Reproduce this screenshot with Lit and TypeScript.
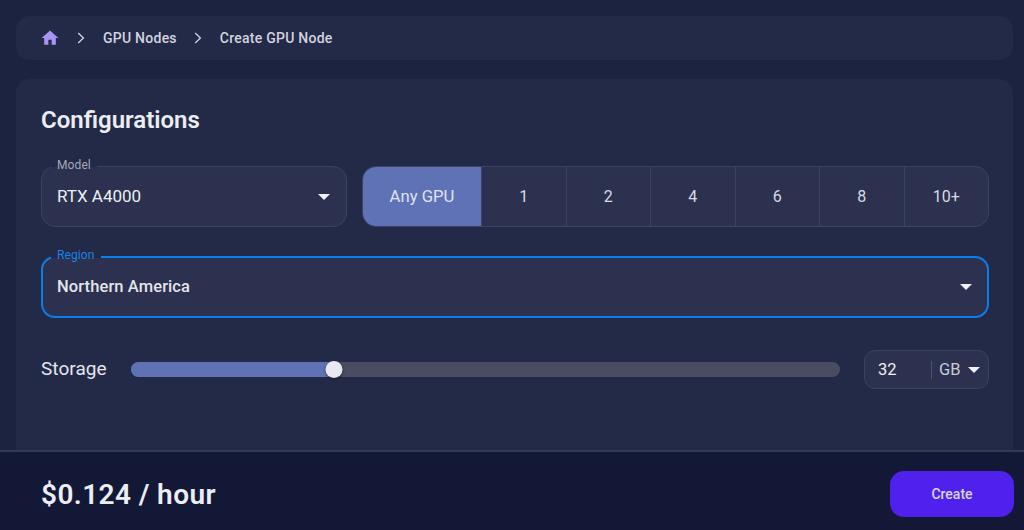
import { LitElement, html, css } from "lit";
import { customElement } from "lit/decorators.js";

const caret = html`<svg class="caret" width="12" height="6" viewBox="0 0 12 6"><path d="M0 0H12L6 6Z" fill="#f2f2f6"/></svg>`;

@customElement("app-root")
export class AppRoot extends LitElement {
  static styles = css`
    :host { display: block; width: 1024px; height: 530px; overflow: hidden; background: #1c2340; font-family: Roboto, "Liberation Sans", sans-serif; color: #e9e9f0; }
    * { box-sizing: border-box; }
    .page { height: 530px; display: flex; flex-direction: column; }
    .main { flex: 1; min-height: 0; padding: 16px 11px 0 16px; display: flex; flex-direction: column; gap: 19px; }
    .crumbs { height: 44px; border-radius: 14px; background: #232a48; display: flex; align-items: center; padding-left: 24px; font-size: 14px; font-weight: 500; color: #d2d3df; letter-spacing: 0.25px; }
    .crumbs .home { margin-right: 17px; }
    .crumbs .chev { margin-right: 18px; }
    .crumbs .lbl { margin-right: 17px; }
    .card { flex: 1; background: #232a48; border-radius: 14px 14px 0 0; padding: 25px 24px 0 25px; }
    h1 { margin: 0 0 30px; font-size: 24px; line-height: 32px; font-weight: 600; color: #ecedf3; }
    .row { display: flex; gap: 15px; margin-bottom: 30px; }
    .field { position: relative; height: 61px; border: 1px solid #3c4360; border-radius: 14px; background: #2b314e; display: flex; align-items: center; justify-content: space-between; padding: 0 16px 0 15px; font-size: 17px; color: #eeeef4; }
    .val { margin-top: -2px; }
    .model { width: 306px; flex: none; }
    .region { height: 62px; margin-top: -1px; border: 2px solid #0a7fec; padding: 0 15px 0 14px; margin-bottom: 32px; font-size: 16.5px; font-weight: 500; letter-spacing: 0.1px; color: #e4e5ec; }
    .legend { position: absolute; top: -12px; left: 9px; padding: 0 6px; font-size: 12px; font-weight: 400; line-height: 20px; letter-spacing: 0.1px; background: linear-gradient(#232a48 12px, #2b314e 12px); color: #a5a8b8; }
    .region .legend { left: 8px; top: -13px; color: #1b83e6; background: linear-gradient(#232a48 13px, #2b314e 13px); }
    .toggle { flex: 1; height: 61px; display: flex; border: 1px solid #3c4360; border-radius: 14px; background: #2b314e; overflow: hidden; }
    .opt { flex: 1; display: flex; align-items: center; justify-content: center; font-size: 16px; color: #d9dae4; border-left: 1px solid #3c4360; }
    .opt.on { flex: none; width: 118px; background: #5f72b6; border-left: 0; color: #dfe2f0; font-size: 16.7px; }
    .storage { display: flex; align-items: center; height: 39px; }
    .storage .name { width: 90px; font-size: 19px; letter-spacing: 0.05px; color: #e4e5ed; margin-top: -2px; }
    .slider { position: relative; width: 709px; height: 15px; border-radius: 8px; background: #4a4d62; }
    .fill { height: 100%; border-radius: 8px 0 0 8px; background: #5f72b6; }
    .thumb { position: absolute; top: -1px; width: 17px; height: 17px; border-radius: 50%; background: #e9e9f1; box-shadow: 0 1px 3px rgba(0,0,0,.45); transform: translateX(-50%); }
    .unit { margin-left: 24px; width: 125px; height: 39px; border: 1px solid #3c4360; border-radius: 11px; background: #2b314e; display: flex; align-items: center; padding-left: 13px; font-size: 16.5px; }
    .num { width: 53px; color: #eeeef4; }
    .sep { width: 1px; height: 18px; background: #4d5370; margin-right: 7px; }
    .gb { color: #c9cbd8; margin-right: 7px; }
    .foot { flex: none; height: 80px; background: #121836; border-top: 2px solid #333a59; display: flex; align-items: center; justify-content: space-between; padding: 6px 10px 0 41px; }
    .price { font-size: 28px; font-weight: 600; letter-spacing: 0.4px; color: #ecedf3; }
    .create { width: 124px; height: 46px; border: 0; border-radius: 14px; background: #5020ec; color: #dcd6fb; font: 500 14px Roboto, "Liberation Sans", sans-serif; }
  `;

  render() {
    const opts = ["1", "2", "4", "6", "8", "10+"];
    return html`<div class="page">
      <div class="main">
        <nav class="crumbs">
          <svg class="home" width="20" height="20" viewBox="0 0 24 24"><path d="M10 20v-6h4v6h5v-8h3L12 3 2 12h3v8z" fill="#a894f2"/></svg>
          <svg class="chev" width="8" height="12" viewBox="0 0 8 12"><path d="M1.2 1l5.2 5-5.2 5" fill="none" stroke="#d3d4df" stroke-width="1.3"/></svg>
          <span class="lbl">GPU Nodes</span>
          <svg class="chev" width="8" height="12" viewBox="0 0 8 12"><path d="M1.2 1l5.2 5-5.2 5" fill="none" stroke="#d3d4df" stroke-width="1.3"/></svg>
          <span>Create GPU Node</span>
        </nav>
        <section class="card">
          <h1>Configurations</h1>
          <div class="row">
            <div class="field model"><span class="legend">Model</span><span class="val">RTX A4000</span>${caret}</div>
            <div class="toggle">
              <div class="opt on">Any GPU</div>
              ${opts.map((o) => html`<div class="opt">${o}</div>`)}
            </div>
          </div>
          <div class="field region"><span class="legend">Region</span><span class="val">Northern America</span>${caret}</div>
          <div class="storage">
            <span class="name">Storage</span>
            <div class="slider"><div class="fill" style="width:203px"></div><div class="thumb" style="left:203px"></div></div>
            <div class="unit"><span class="num">32</span><span class="sep"></span><span class="gb">GB</span>${caret}</div>
          </div>
        </section>
      </div>
      <footer class="foot">
        <span class="price">$0.124 / hour</span>
        <button class="create">Create</button>
      </footer>
    </div>`;
  }
}
